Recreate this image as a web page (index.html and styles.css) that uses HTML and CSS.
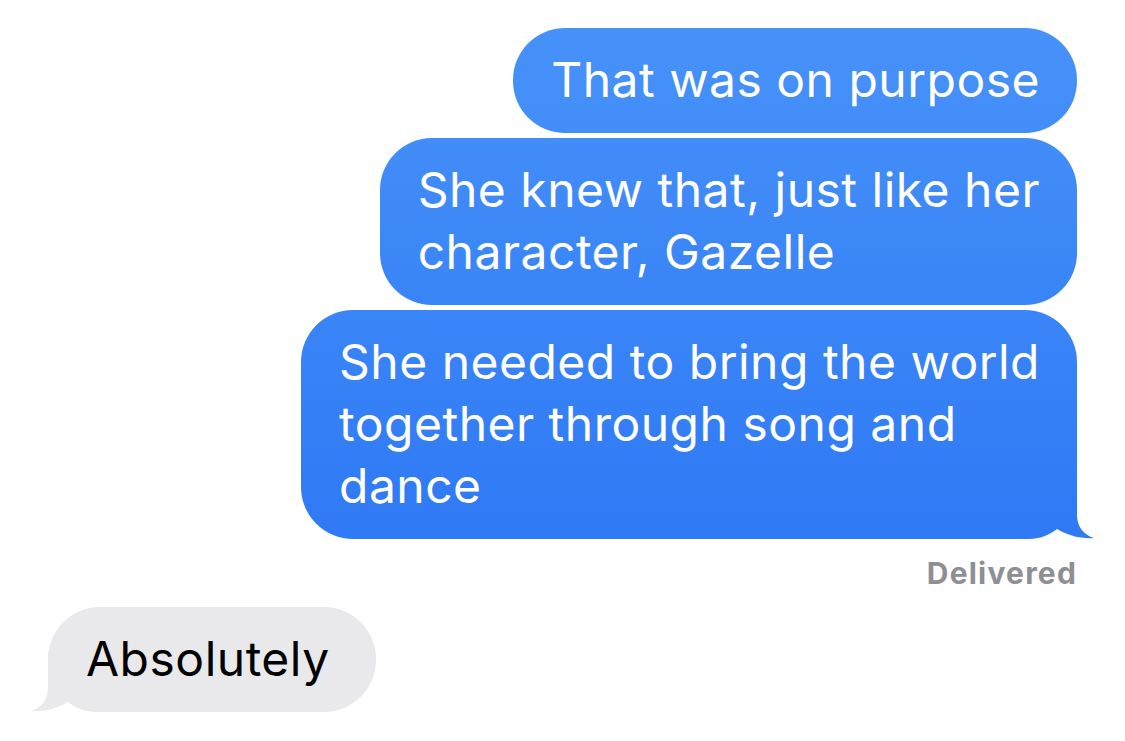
FILE: index.html
```html
<!DOCTYPE html>
<html>
<head>
<meta charset="utf-8">
<link rel="stylesheet" href="styles.css">
</head>
<body>
<div class="thread">
  <div class="bubble sent"><span class="text">That was on purpose</span></div>
  <div class="bubble sent"><span class="text">She knew that, just like her<br>character, Gazelle</span></div>
  <div class="bubble sent has-tail"><span class="tail"></span><span class="text">She needed to bring the world<br>together through song and<br>dance</span></div>
  <div class="status">Delivered</div>
  <div class="bubble received has-tail"><span class="tail"></span><span class="text">Absolutely</span></div>
</div>
</body>
</html>
```
FILE: styles.css
```css
html, body {
  margin: 0;
  padding: 0;
  background: #ffffff;
}
body {
  width: 1125px;
  height: 741px;
  overflow: hidden;
  font-family: Inter, "Noto Sans", sans-serif;
}
.thread {
  display: flex;
  flex-direction: column;
  align-items: flex-end;
  padding: 28px 48px 0 48px;
}
.bubble {
  position: relative;
  font-size: 48px;
  line-height: 62px;
  letter-spacing: 0.5px;
  padding: 21px 37px 22px 38px;
  border-radius: 52px;
  white-space: nowrap;
  margin-bottom: 5px;
}
.text {
  position: relative;
  z-index: 1;
}
.sent,
.sent .tail {
  color: #ffffff;
  background: linear-gradient(to bottom, #4893f9 0px, #2c77f4 600px) fixed;
}
.tail {
  position: absolute;
  bottom: 0;
  width: 70px;
  height: 60px;
  clip-path: path('M0 0 H50 V36 C50 48 57 56 67 59 C55 60 42 57 30 50 C22 56 14 60 0 60 Z');
}
.sent .tail {
  right: -20px;
}
.status {
  margin-top: 11px;
  font-size: 30px;
  font-weight: 700;
  color: #8e8e93;
  letter-spacing: 1.2px;
}
.received {
  align-self: flex-start;
  margin-top: 16px;
  padding-right: 46px;
  background: #e9e9eb;
  color: #000000;
}
.received .tail {
  left: -20px;
  background: #e9e9eb;
  transform: scaleX(-1);
}
```
